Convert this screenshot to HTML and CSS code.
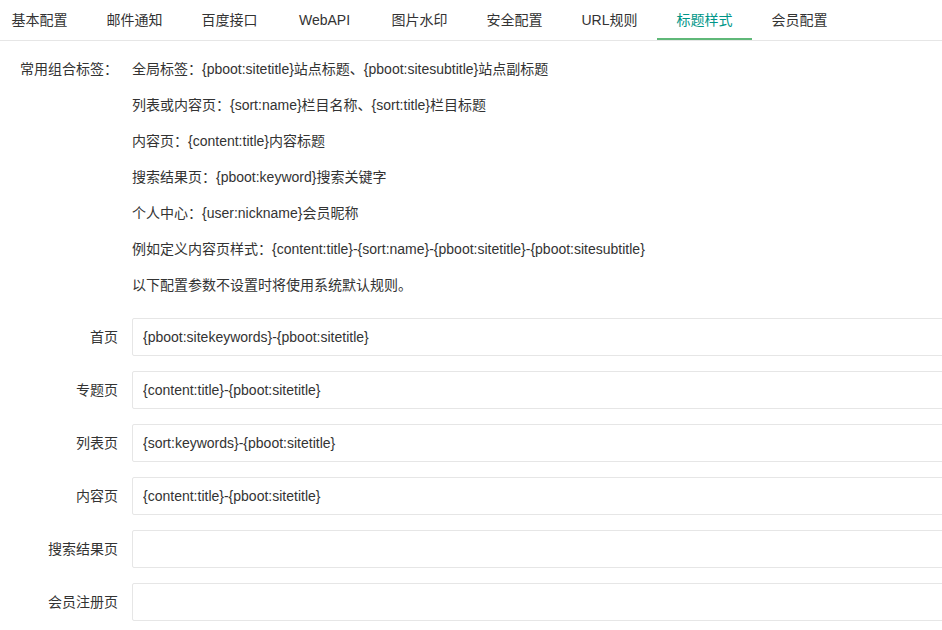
FILE: index.html
```html
<!DOCTYPE html>
<html lang="zh-CN">
<head>
<meta charset="utf-8">
<title>标题样式</title>
<link rel="stylesheet" href="styles.css">
</head>
<body>
<div class="tabs">
  <ul class="tab-title">
    <li class="first">基本配置</li>
    <li>邮件通知</li>
    <li>百度接口</li>
    <li>WebAPI</li>
    <li>图片水印</li>
    <li>安全配置</li>
    <li>URL规则</li>
    <li class="active">标题样式</li>
    <li>会员配置</li>
  </ul>
  <div class="tab-content">
    <div class="help-row">
      <div class="label">常用组合标签：</div>
      <div class="help-lines">
        <div class="line">全局标签：{pboot:sitetitle}站点标题、{pboot:sitesubtitle}站点副标题</div>
        <div class="line">列表或内容页：{sort:name}栏目名称、{sort:title}栏目标题</div>
        <div class="line">内容页：{content:title}内容标题</div>
        <div class="line">搜索结果页：{pboot:keyword}搜索关键字</div>
        <div class="line">个人中心：{user:nickname}会员昵称</div>
        <div class="line">例如定义内容页样式：{content:title}-{sort:name}-{pboot:sitetitle}-{pboot:sitesubtitle}</div>
        <div class="line">以下配置参数不设置时将使用系统默认规则。</div>
      </div>
    </div>
    <div class="form-item">
      <label class="label">首页</label>
      <input class="input" type="text" value="{pboot:sitekeywords}-{pboot:sitetitle}">
    </div>
    <div class="form-item">
      <label class="label">专题页</label>
      <input class="input" type="text" value="{content:title}-{pboot:sitetitle}">
    </div>
    <div class="form-item">
      <label class="label">列表页</label>
      <input class="input" type="text" value="{sort:keywords}-{pboot:sitetitle}">
    </div>
    <div class="form-item">
      <label class="label">内容页</label>
      <input class="input" type="text" value="{content:title}-{pboot:sitetitle}">
    </div>
    <div class="form-item">
      <label class="label">搜索结果页</label>
      <input class="input" type="text" value="">
    </div>
    <div class="form-item">
      <label class="label">会员注册页</label>
      <input class="input" type="text" value="">
    </div>
  </div>
</div>
</body>
</html>
```
FILE: styles.css
```css
html, body {
  margin: 0;
  padding: 0;
  background: #fff;
  overflow: hidden;
}
body {
  width: 942px;
  height: 630px;
  font-family: "Liberation Sans", "Noto Sans CJK SC", sans-serif;
  font-size: 14px;
  color: #333;
}
.tab-title {
  list-style: none;
  margin: 0;
  padding: 0;
  display: flex;
  height: 40px;
  border-bottom: 1px solid #e6e6e6;
}
.tab-title li {
  flex: 0 0 95px;
  box-sizing: border-box;
  line-height: 40px;
  height: 40px;
  text-align: center;
  white-space: nowrap;
  color: #333;
}
.tab-title li.first {
  flex-basis: 87px;
  padding-right: 8px;
}
.tab-title li.active {
  color: #009688;
  border-bottom: 2px solid #5fb878;
  line-height: 40px;
}
.tab-content {
  padding-top: 10px;
}
.help-row {
  display: grid;
  grid-template-columns: 132px 1fr;
}
.label {
  display: block;
  padding-right: 14px;
  text-align: right;
  white-space: nowrap;
  line-height: 36px;
}
.help-lines .line {
  line-height: 36px;
  white-space: nowrap;
}
.form-item {
  display: grid;
  grid-template-columns: 132px 1fr;
  align-items: center;
  margin-top: 15px;
}
.form-item .label {
  line-height: 38px;
}
.input {
  width: 900px;
  height: 38px;
  box-sizing: border-box;
  border: 1px solid #e6e6e6;
  border-radius: 2px;
  padding: 0 10px;
  font-family: "Liberation Sans", "Noto Sans CJK SC", sans-serif;
  font-size: 14px;
  color: #333;
  background: #fff;
  outline: none;
}
```
